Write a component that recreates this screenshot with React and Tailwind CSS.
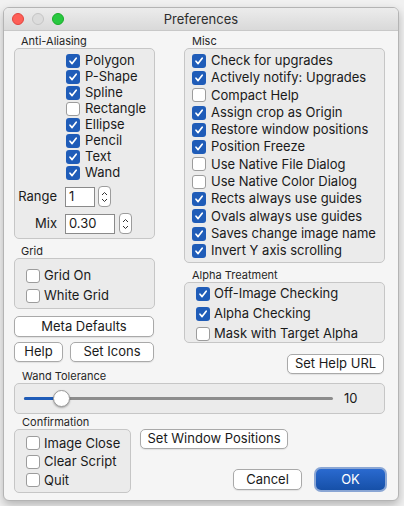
import React from "react";

const font = { fontFamily: "Inter, 'Liberation Sans', sans-serif" };

function Check({ on }) {
  return on ? (
    <span className="flex h-[14px] w-[14px] shrink-0 items-center justify-center rounded-[3px] bg-[#1f5cb8]">
      <svg width="10" height="10" viewBox="0 0 10 10">
        <path d="M2 5.2 L4.1 7.6 L8.2 2.2" fill="none" stroke="white" strokeWidth="1.7" strokeLinecap="round" strokeLinejoin="round" />
      </svg>
    </span>
  ) : (
    <span className="block h-[14px] w-[14px] shrink-0 rounded-[3px] border border-[#9c9c9c] bg-white" />
  );
}

function Row({ on, label, h = "h-[16px]", gap = "gap-[5px]" }) {
  return (
    <div className={`flex items-center ${gap} ${h}`}>
      <Check on={on} />
      <span className="whitespace-nowrap">{label}</span>
    </div>
  );
}

function Btn({ children, className = "" }) {
  return (
    <div className={`flex items-center justify-center rounded-[5px] border border-[#a9a9a9] bg-white text-[13px] shadow-[0_1px_1px_rgba(0,0,0,0.08)] ${className}`}>
      {children}
    </div>
  );
}

function Stepper() {
  return (
    <div className="flex h-[21px] w-[13px] flex-col items-center justify-center rounded-[4px] border border-[#9c9c9c] bg-white">
      <svg width="7" height="14" viewBox="0 0 7 14">
        <path d="M1 5 L3.5 2.5 L6 5" fill="none" stroke="#333" strokeWidth="1" />
        <path d="M1 9 L3.5 11.5 L6 9" fill="none" stroke="#333" strokeWidth="1" />
      </svg>
    </div>
  );
}

const Label = ({ children, className = "" }) => (
  <div className={`h-[14px] text-[11px] leading-[14px] text-[#262626] ${className}`}>{children}</div>
);

const boxCls = "rounded-[5px] border border-[#c6c6c6] bg-[#ebebeb]";

export default function App() {
  const aa = [
    ["Polygon", true], ["P-Shape", true], ["Spline", true], ["Rectangle", false],
    ["Ellipse", true], ["Pencil", true], ["Text", true], ["Wand", true],
  ];
  const misc = [
    ["Check for upgrades", true], ["Actively notify: Upgrades", true], ["Compact Help", false],
    ["Assign crop as Origin", true], ["Restore window positions", true], ["Position Freeze", true],
    ["Use Native File Dialog", false], ["Use Native Color Dialog", false], ["Rects always use guides", true],
    ["Ovals always use guides", true], ["Saves change image name", true], ["Invert Y axis scrolling", true],
  ];
  return (
    <div className="h-[506px] w-[404px] bg-[#f1f1f1] pl-[3px] pt-[7px] text-[13px] text-[#1a1a1a]" style={font}>
      <div className="h-[494px] w-[396px] overflow-hidden rounded-[6px] border border-[#b4b4b4] bg-[#f5f5f5] shadow-[0_4px_10px_rgba(0,0,0,0.25)]">
        {/* title bar */}
        <div className="relative flex h-[23px] items-center justify-center border-b border-[#c8c8c8] bg-gradient-to-b from-[#ececec] to-[#d9d9d9]">
          <div className="absolute left-[8px] top-[5px] flex gap-[8px]">
            <span className="h-[12px] w-[12px] rounded-full border border-[#e0443e] bg-[#fe5f57]" />
            <span className="h-[12px] w-[12px] rounded-full border border-[#c4c4c4] bg-[#dcdcdc]" />
            <span className="h-[12px] w-[12px] rounded-full border border-[#1aab29] bg-[#28c840]" />
          </div>
          <span className="pt-[1px] text-[13px] text-[#2d2d2d]">Preferences</span>
        </div>

        <div className="pl-[10px] pt-[3px]">
          {/* top section */}
          <div className="flex gap-[29px]">
            {/* left column */}
            <div className="flex w-[141px] flex-col">
              <Label className="pl-[7px]">Anti-Aliasing</Label>
              <div className={`${boxCls} h-[191px] pt-[4px]`}>
                <div className="flex flex-col pl-[51px]">
                  {aa.map(([l, on]) => (
                    <Row key={l} on={on} label={l} />
                  ))}
                </div>
                <div className="mt-[5px] flex items-center">
                  <span className="w-[42px] text-right">Range</span>
                  <div className="ml-[8px] flex h-[20px] w-[30px] items-center border border-[#8a8a8a] bg-white pl-[3px]">1</div>
                  <div className="ml-[3px]"><Stepper /></div>
                </div>
                <div className="mt-[6px] flex items-center">
                  <span className="w-[42px] text-right">Mix</span>
                  <div className="ml-[8px] flex h-[20px] w-[50px] items-center border border-[#8a8a8a] bg-white pl-[3px]">0.30</div>
                  <div className="ml-[4px]"><Stepper /></div>
                </div>
              </div>
              <Label className="mt-[5px] pl-[7px]">Grid</Label>
              <div className={`${boxCls} h-[51px] pl-[11px] pt-[7px]`}>
                <Row on={false} label="Grid On" h="h-[20px]" gap="gap-[4px]" />
                <Row on={false} label="White Grid" h="h-[20px]" gap="gap-[4px]" />
              </div>
              <Btn className="mt-[7px] h-[21px] w-[140px]">Meta Defaults</Btn>
              <div className="mt-[5px] flex gap-[7px]">
                <Btn className="h-[20px] w-[49px]">Help</Btn>
                <Btn className="h-[20px] w-[84px]">Set Icons</Btn>
              </div>
            </div>

            {/* right column */}
            <div className="flex w-[201px] flex-col">
              <Label className="pl-[8px]">Misc</Label>
              <div className={`${boxCls} h-[215px] pl-[7px] pt-[3px]`}>
                {misc.map(([l, on]) => (
                  <Row key={l} on={on} label={l} h="h-[17.3px]" />
                ))}
              </div>
              <Label className="mt-[5px] pl-[8px]">Alpha Treatment</Label>
              <div className={`${boxCls} h-[61px] pl-[11px] pt-[1px]`}>
                <Row on={true} label="Off-Image Checking" h="h-[20px]" gap="gap-[4px]" />
                <Row on={true} label="Alpha Checking" h="h-[20px]" gap="gap-[4px]" />
                <Row on={false} label="Mask with Target Alpha" h="h-[20px]" gap="gap-[4px]" />
              </div>
              <div className="-mb-[5px] mt-[11px] flex justify-end pr-[1px]">
                <Btn className="h-[20px] w-[97px]">Set Help URL</Btn>
              </div>
            </div>
          </div>

          {/* wand tolerance */}
          <Label className="pl-[8px]">Wand Tolerance</Label>
          <div className={`${boxCls} flex h-[31px] w-[371px] items-center pl-[9px]`}>
            <div className="relative h-[3px] w-[309px] rounded-full bg-[#8c8c8c]">
              <div className="absolute left-0 top-0 h-[3px] w-[40px] rounded-full bg-[#1f5cb8]" />
              <div className="absolute left-[29px] top-[-7px] h-[17px] w-[17px] rounded-full border border-[#9a9a9a] bg-white shadow-[0_1px_2px_rgba(0,0,0,0.3)]" />
            </div>
            <span className="ml-[11px]">10</span>
          </div>

          {/* confirmation */}
          <Label className="mt-[1px] pl-[8px]">Confirmation</Label>
          <div className="flex">
            <div className={`${boxCls} h-[64px] w-[117px] pl-[11px] pt-[4px]`}>
              <Row on={false} label="Image Close" h="h-[18.5px]" gap="gap-[4px]" />
              <Row on={false} label="Clear Script" h="h-[18.5px]" gap="gap-[4px]" />
              <Row on={false} label="Quit" h="h-[18.5px]" gap="gap-[4px]" />
            </div>
            <div className="ml-[9px] flex flex-1 flex-col">
              <Btn className="h-[20px] w-[148px]">Set Window Positions</Btn>
              <div className="mt-auto flex items-center gap-[12px] pb-[1px] pl-[93px]">
                <Btn className="h-[21px] w-[69px]">Cancel</Btn>
                <div className="rounded-[7px] bg-[#8aa6d4] p-[2px]">
                  <div className="flex h-[21px] w-[69px] items-center justify-center rounded-[5px] bg-gradient-to-b from-[#2a6ad0] to-[#1650a8] text-white">OK</div>
                </div>
              </div>
            </div>
          </div>
        </div>
      </div>
    </div>
  );
}
